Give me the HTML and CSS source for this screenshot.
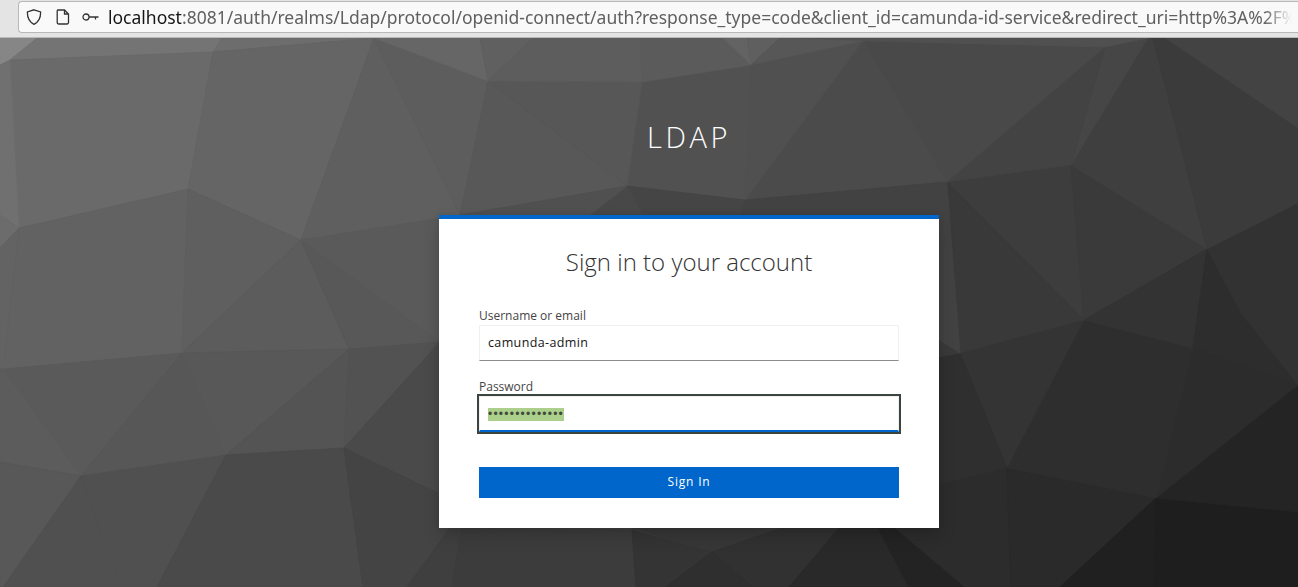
FILE: index.html
```html
<!DOCTYPE html>
<html lang="en">
<head>
<meta charset="utf-8">
<title>Sign in to LDAP</title>
<link rel="stylesheet" href="styles.css">
</head>
<body>
<div class="browser-bar">
  <div class="url-box">
    <svg class="icon icon-shield" viewBox="0 0 16 16"><path d="M8 .8 14.6 3c.2 5.800-1.600 9.800-6.600 12.300C3 12.800 1.200 8.800 1.400 3Z"/></svg>
    <svg class="icon icon-page" viewBox="0 0 14 16"><path d="M1.700 1h6.800l4 4v8.500a1.500 1.500 0 0 1-1.500 1.500H2.700a1.500 1.500 0 0 1-1.500-1.500V2.500A1.500 1.500 0 0 1 1.700 1ZM8.500 1v4h4"/></svg>
    <svg class="icon icon-key" viewBox="0 0 17 8"><circle cx="4" cy="4" r="3"/><path d="M7 4h9.500M13.500 4v2.500"/></svg>
    <div class="url-text"><span class="url-host">localhost</span>:8081/auth/realms/Ldap/protocol/openid-connect/auth?response_type=code&amp;client_id=camunda-id-service&amp;redirect_uri=http%3A%2F%</div>
  </div>
</div>

<main class="stage">
  <svg class="backdrop" viewBox="0 38 1298 549" preserveAspectRatio="none">
    <polygon color="#868686" points="0,38 37,38 10,60 0,65"/>
    <polygon color="#747474" points="37,38 222,38 213,52 10,60"/>
    <polygon color="#6d6d6d" points="222,38 374,38 213,52"/>
    <polygon color="#6a6a6a" points="10,60 213,52 188,189 19,228"/>
    <polygon color="#656565" points="213,52 374,38 301,240 188,189"/>
    <polygon color="#5f5f5f" points="374,38 460,215 301,240"/>
    <polygon color="#5d5d5d" points="374,38 488,81 460,215"/>
    <polygon color="#666666" points="374,38 480,38 488,81"/>
    <polygon color="#707070" points="0,65 10,60 19,228 0,215"/>
    <polygon color="#6c6c6c" points="0,215 19,228 0,248"/>
    <polygon color="#636363" points="0,248 19,228 3,369 0,369"/>
    <polygon color="#626262" points="19,228 188,189 182,353 3,369"/>
    <polygon color="#5f5f5f" points="188,189 301,240 182,353"/>
    <polygon color="#5c5c5c" points="301,240 349,349 182,353"/>
    <polygon color="#585858" points="301,240 440,342 349,349"/>
    <polygon color="#5a5a5a" points="301,240 460,215 440,342"/>
    <polygon color="#5a5a5a" points="3,369 182,353 81,476"/>
    <polygon color="#575757" points="182,353 226,455 81,476"/>
    <polygon color="#585858" points="182,353 349,349 226,455"/>
    <polygon color="#545454" points="349,349 344,448 226,455"/>
    <polygon color="#525252" points="349,349 440,342 344,448"/>
    <polygon color="#4a4a4a" points="344,448 440,342 440,494"/>
    <polygon color="#5c5c5c" points="0,369 3,369 81,476 0,462"/>
    <polygon color="#585858" points="0,462 81,476 3,587 0,587"/>
    <polygon color="#505050" points="81,476 121,587 3,587"/>
    <polygon color="#505050" points="81,476 226,455 157,587 121,587"/>
    <polygon color="#4a4a4a" points="226,455 344,448 363,587 157,587"/>
    <polygon color="#444444" points="344,448 440,494 450,528 407,587 363,587"/>
    <polygon color="#3f3f3f" points="407,587 450,528 462,528 452,587"/>
    <polygon color="#3c3c3c" points="452,587 462,528 632,530 636,587"/>
    <polygon color="#343434" points="632,530 712,552 666,587 636,587"/>
    <polygon color="#373737" points="632,528 782,528 712,552"/>
    <polygon color="#313131" points="712,552 782,528 839,528 789,587 752,587"/>
    <polygon color="#2f2f2f" points="712,552 752,587 666,587"/>
    <polygon color="#292929" points="839,528 878,528 909,587 789,587"/>
    <polygon color="#232323" points="878,528 895,528 965,587 909,587"/>
    <polygon color="#2c2c2c" points="895,528 939,484 1007,468 1011,587 965,587"/>
    <polygon color="#2a2a2a" points="1007,468 1156,498 1060,587 1011,587"/>
    <polygon color="#202020" points="1156,498 1155,587 1060,587"/>
    <polygon color="#1e1e1e" points="1156,498 1298,512 1298,587 1155,587"/>
    <polygon color="#242424" points="1156,498 1298,385 1298,512"/>
    <polygon color="#2c2c2c" points="1193,348 1298,385 1156,498"/>
    <polygon color="#2e2e2e" points="1084,320 1193,348 1156,498 1007,468"/>
    <polygon color="#343434" points="960,353 1084,320 1007,468"/>
    <polygon color="#2f2f2f" points="939,357 960,353 1007,468 939,484"/>
    <polygon color="#3d3d3d" points="947,182 1071,165 1084,320"/>
    <polygon color="#393939" points="947,182 1084,320 960,353 939,357 939,182"/>
    <polygon color="#3a3a3a" points="1071,165 1207,249 1084,320"/>
    <polygon color="#333333" points="1084,320 1207,249 1193,348"/>
    <polygon color="#2d2d2d" points="1207,249 1241,313 1298,385 1193,348"/>
    <polygon color="#323232" points="1298,203 1298,385 1241,313 1207,249"/>
    <polygon color="#3f3f3f" points="1071,165 1148,38 1153,38 1207,249"/>
    <polygon color="#3b3b3b" points="1153,38 1165,38 1298,128 1298,203 1207,249"/>
    <polygon color="#434343" points="1165,38 1298,38 1298,128"/>
    <polygon color="#464646" points="1105,47 1148,38 1071,165"/>
    <polygon color="#434343" points="947,182 1105,47 1071,165"/>
    <polygon color="#494949" points="863,41 1105,47 947,182"/>
    <polygon color="#4b4b4b" points="863,41 947,182 745,200"/>
    <polygon color="#505050" points="780,38 1148,38 1105,47 863,41"/>
    <polygon color="#424242" points="745,200 947,182 960,353 740,215"/>
    <polygon color="#505050" points="751,65 863,41 745,200"/>
    <polygon color="#515151" points="642,82 751,65 745,200 627,186"/>
    <polygon color="#575757" points="488,81 642,82 627,186"/>
    <polygon color="#585858" points="488,81 627,186 460,215"/>
    <polygon color="#5b5b5b" points="640,38 723,38 751,65 642,82"/>
    <polygon color="#5d5d5d" points="533,38 640,38 642,82 488,81"/>
    <polygon color="#606060" points="480,38 533,38 488,81"/>
    <polygon color="#636363" points="723,38 747,38 751,65"/>
    <polygon color="#5f5f5f" points="747,38 780,38 751,65"/>
    <polygon color="#575757" points="780,38 863,41 751,65"/>
    <polygon color="#454545" points="627,186 745,200 740,215 643,215"/>
    <polygon color="#484848" points="590,215 627,186 643,215"/>
    <polygon color="#505050" points="460,215 627,186 590,215"/>
  </svg>

  <h1 class="realm">LDAP</h1>

  <section class="card">
    <h2 class="card-title">Sign in to your account</h2>
    <div class="field">
      <label class="field-label">Username or email</label>
      <div class="text-box">camunda-admin</div>
    </div>
    <div class="field field-password">
      <label class="field-label">Password</label>
      <div class="text-box text-box-focus"><span class="selected">••••••••••••••</span></div>
    </div>
    <button class="submit" type="button">Sign In</button>
  </section>
</main>
</body>
</html>
```

FILE: styles.css
```css
* {
  box-sizing: border-box;
}

html,
body {
  margin: 0;
  height: 100%;
  overflow: hidden;
}

body {
  display: flex;
  flex-direction: column;
  font-family: "Open Sans", sans-serif;
  background: #404040;
}

.browser-bar {
  height: 38px;
  flex: none;
  padding: 1px 0 0 18px;
  background: #e4e4e4;
  border-bottom: 1px solid #b9b9b9;
  position: relative;
  z-index: 1;
}

.url-box {
  height: 32px;
  display: flex;
  align-items: center;
  padding-left: 7px;
  background: #f9f9f9;
  border: 1px solid #b8b8b8;
  border-right: 0;
  border-radius: 4px 0 0 4px;
  overflow: hidden;
}

.icon {
  flex: none;
  fill: none;
  stroke: #333;
  stroke-width: 1.3;
}

.icon-shield {
  width: 16px;
  height: 16px;
}

.icon-page {
  width: 14px;
  height: 16px;
  margin-left: 14px;
}

.icon-key {
  width: 17px;
  height: 8px;
  margin-left: 12px;
}

.url-text {
  flex: 1;
  min-width: 0;
  margin-left: 9px;
  font-family: "Noto Sans", sans-serif;
  font-size: 17.5px;
  line-height: 30px;
  color: #606060;
  white-space: nowrap;
  -webkit-mask-image: linear-gradient(to left, transparent 0, transparent 6px, #000 34px);
  mask-image: linear-gradient(to left, transparent 0, transparent 6px, #000 34px);
}

.url-host {
  color: #161616;
}

.stage {
  flex: 1;
  position: relative;
  display: flex;
  flex-direction: column;
  align-items: center;
  padding-left: 80px;
}

.backdrop {
  position: absolute;
  inset: 0;
  width: 100%;
  height: 100%;
  filter: blur(0.5px);
}

.backdrop polygon {
  fill: currentColor;
  stroke: currentColor;
  stroke-width: 0.8;
}

.realm {
  position: relative;
  margin: 81px 0 61px;
  font-size: 29px;
  font-weight: 300;
  line-height: 35px;
  letter-spacing: 3.6px;
  color: #fff;
}

.card {
  position: relative;
  width: 500px;
  height: 313px;
  padding: 0 40px;
  background: #fff;
  border-top: 4px solid #06c;
  box-shadow: 0 8px 16px rgba(3, 3, 3, 0.16), 0 0 6px rgba(3, 3, 3, 0.08);
}

.card-title {
  margin: 26px 0 0;
  font-size: 24px;
  font-weight: 300;
  line-height: 34px;
  text-align: center;
  color: #333;
}

.field {
  margin-top: 28px;
}

.field-password {
  margin-top: 17px;
}

.field-label {
  display: block;
  height: 18px;
  font-size: 12px;
  line-height: 18px;
  color: #444;
}

.text-box {
  height: 36px;
  padding: 0 8px;
  font-size: 12.500px;
  line-height: 33px;
  letter-spacing: 0.37px;
  color: #151515;
  background: #fff;
  border: 1px solid #f0f0f0;
  border-bottom-color: #8a8d90;
}

.text-box-focus {
  line-height: 33px;
  border-bottom: 2px solid #06c;
  outline: 2px solid #3c443e;
}

.selected {
  display: inline-block;
  height: 13px;
  font-family: "Liberation Sans", sans-serif;
  font-size: 12px;
  line-height: 13px;
  letter-spacing: 1.230px;
  vertical-align: middle;
  color: #3f4a3a;
  background: #acd08c;
}

.submit {
  display: block;
  width: 100%;
  height: 31px;
  margin-top: 35px;
  padding: 0 0 2px;
  border: 0;
  font-family: "Open Sans", sans-serif;
  font-size: 12px;
  letter-spacing: 0.8px;
  color: #fff;
  background: #06c;
}
```
